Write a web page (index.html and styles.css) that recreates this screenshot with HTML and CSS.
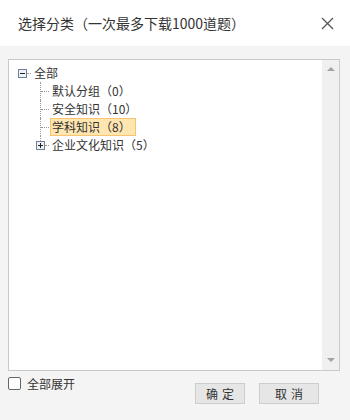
FILE: index.html
```html
<!DOCTYPE html>
<html lang="zh-CN">
<head>
    <meta charset="UTF-8">
    <title>选择分类</title>
    <link rel="stylesheet" href="styles.css">
</head>
<body>
    <div class="dialog">
        <div class="dialog-header">
            <span class="dialog-title">选择分类（一次最多下载1000道题）</span>
            <span class="dialog-close">
                <svg width="13" height="13" viewBox="0 0 13 13"><path d="M1 1 L12 12 M12 1 L1 12" stroke="#555" stroke-width="1.3" fill="none"/></svg>
            </span>
        </div>
        <div class="dialog-body">
            <div class="tree-box">
                <div class="tree">
                    <div class="row">
                        <span class="switch root">
                            <svg class="toggle" width="9" height="9" viewBox="0 0 9 9"><rect x="0.5" y="0.5" width="8" height="8" fill="#eef1f6" stroke="#6f7f96"/><path d="M2 4.5 H7" stroke="#222" stroke-width="1"/></svg>
                        </span>
                        <span class="label">全部</span>
                    </div>
                    <div class="children">
                        <div class="row">
                            <span class="switch line"></span>
                            <span class="label">默认分组（0）</span>
                        </div>
                        <div class="row">
                            <span class="switch line"></span>
                            <span class="label">安全知识（10）</span>
                        </div>
                        <div class="row">
                            <span class="switch line"></span>
                            <span class="label selected">学科知识（8）</span>
                        </div>
                        <div class="row">
                            <span class="switch last">
                                <svg class="toggle" width="9" height="9" viewBox="0 0 9 9"><rect x="0.5" y="0.5" width="8" height="8" fill="#eef1f6" stroke="#6f7f96"/><path d="M2 4.5 H7 M4.5 2 V7" stroke="#222" stroke-width="1"/></svg>
                            </span>
                            <span class="label">企业文化知识（5）</span>
                        </div>
                    </div>
                </div>
                <div class="scrollbar">
                    <span class="arrow up"></span>
                    <span class="arrow down"></span>
                </div>
            </div>
            <div class="dialog-footer">
                <label class="expand-all">
                    <span class="checkbox"></span>
                    全部展开
                </label>
                <div class="buttons">
                    <button class="btn btn-ok">确定</button>
                    <button class="btn btn-cancel">取消</button>
                </div>
            </div>
        </div>
    </div>
</body>
</html>
```

FILE: styles.css
```css
html, body {
    margin: 0;
    padding: 0;
}
body {
    font-family: "Noto Sans CJK SC", "Liberation Sans", sans-serif;
    color: #333;
    width: 350px;
    height: 420px;
    overflow: hidden;
}
.dialog {
    display: flex;
    flex-direction: column;
    height: 420px;
}
.dialog-header {
    height: 46px;
    background: #fff;
    display: flex;
    align-items: center;
    justify-content: space-between;
    padding: 0 16px 0 18px;
    flex-shrink: 0;
}
.dialog-title {
    font-size: 14px;
    color: #333;
}
.dialog-close {
    display: flex;
    margin-top: 1px;
}
.dialog-body {
    flex: 1;
    background: #f4f4f4;
    padding: 13px 10px 0 8px;
}
.tree-box {
    height: 312px;
    border: 1px solid #c9c9c9;
    background: #fff;
    display: flex;
    box-sizing: border-box;
}
.tree {
    flex: 1;
    padding: 4px 0 0 4px;
    font-size: 12px;
}
.row {
    height: 18px;
    display: flex;
    align-items: center;
}
.children {
    padding-left: 18px;
}
.switch {
    width: 18px;
    height: 18px;
    position: relative;
    flex-shrink: 0;
}
.switch .toggle {
    position: absolute;
    left: 5px;
    top: 5px;
    z-index: 1;
}
.switch.root::after {
    content: "";
    position: absolute;
    left: 14px;
    right: 0;
    top: 9px;
    border-top: 1px dotted #999;
}
.switch.line::before,
.switch.last::before {
    content: "";
    position: absolute;
    left: 9px;
    top: 0;
    bottom: 0;
    border-left: 1px dotted #999;
}
.switch.last::before {
    bottom: 9px;
}
.switch.line::after {
    content: "";
    position: absolute;
    left: 10px;
    right: 0;
    top: 9px;
    border-top: 1px dotted #999;
}
.switch.last::after {
    content: "";
    position: absolute;
    left: 14px;
    right: 0;
    top: 9px;
    border-top: 1px dotted #999;
}
.label {
    margin-left: 1px;
    padding: 0 4px 0 1px;
    height: 16px;
    line-height: 16px;
    border: 1px solid transparent;
    white-space: nowrap;
}
.label.selected {
    background: #ffe6b0;
    border-color: #f9c471;
}
.scrollbar {
    width: 17px;
    background: #f0f0f0;
    display: flex;
    flex-direction: column;
    justify-content: space-between;
    align-items: center;
    padding: 7px 0 8px;
    box-sizing: border-box;
}
.arrow {
    width: 0;
    height: 0;
    border-left: 4px solid transparent;
    border-right: 4px solid transparent;
}
.arrow.up {
    border-bottom: 4px solid #a3a3a3;
}
.arrow.down {
    border-top: 4px solid #a3a3a3;
}
.dialog-footer {
    display: flex;
    justify-content: space-between;
    align-items: flex-start;
    padding-top: 5px;
}
.expand-all {
    display: flex;
    align-items: center;
    font-size: 12px;
    gap: 6px;
    height: 14px;
}
.checkbox {
    width: 11px;
    height: 11px;
    border: 1px solid #666;
    border-radius: 2px;
    background: #fff;
}
.buttons {
    display: flex;
    gap: 14px;
    margin-top: 7px;
    margin-right: 21px;
}
.btn {
    font-family: "Noto Sans CJK SC", "Liberation Sans", sans-serif;
    font-size: 12px;
    letter-spacing: 4px;
    text-indent: 4px;
    color: #333;
    background: #e6e6e6;
    border: 1px solid #cdcdcd;
    height: 21px;
    padding: 0;
    line-height: 19px;
}
.btn-ok {
    width: 50px;
}
.btn-cancel {
    width: 60px;
}
```
